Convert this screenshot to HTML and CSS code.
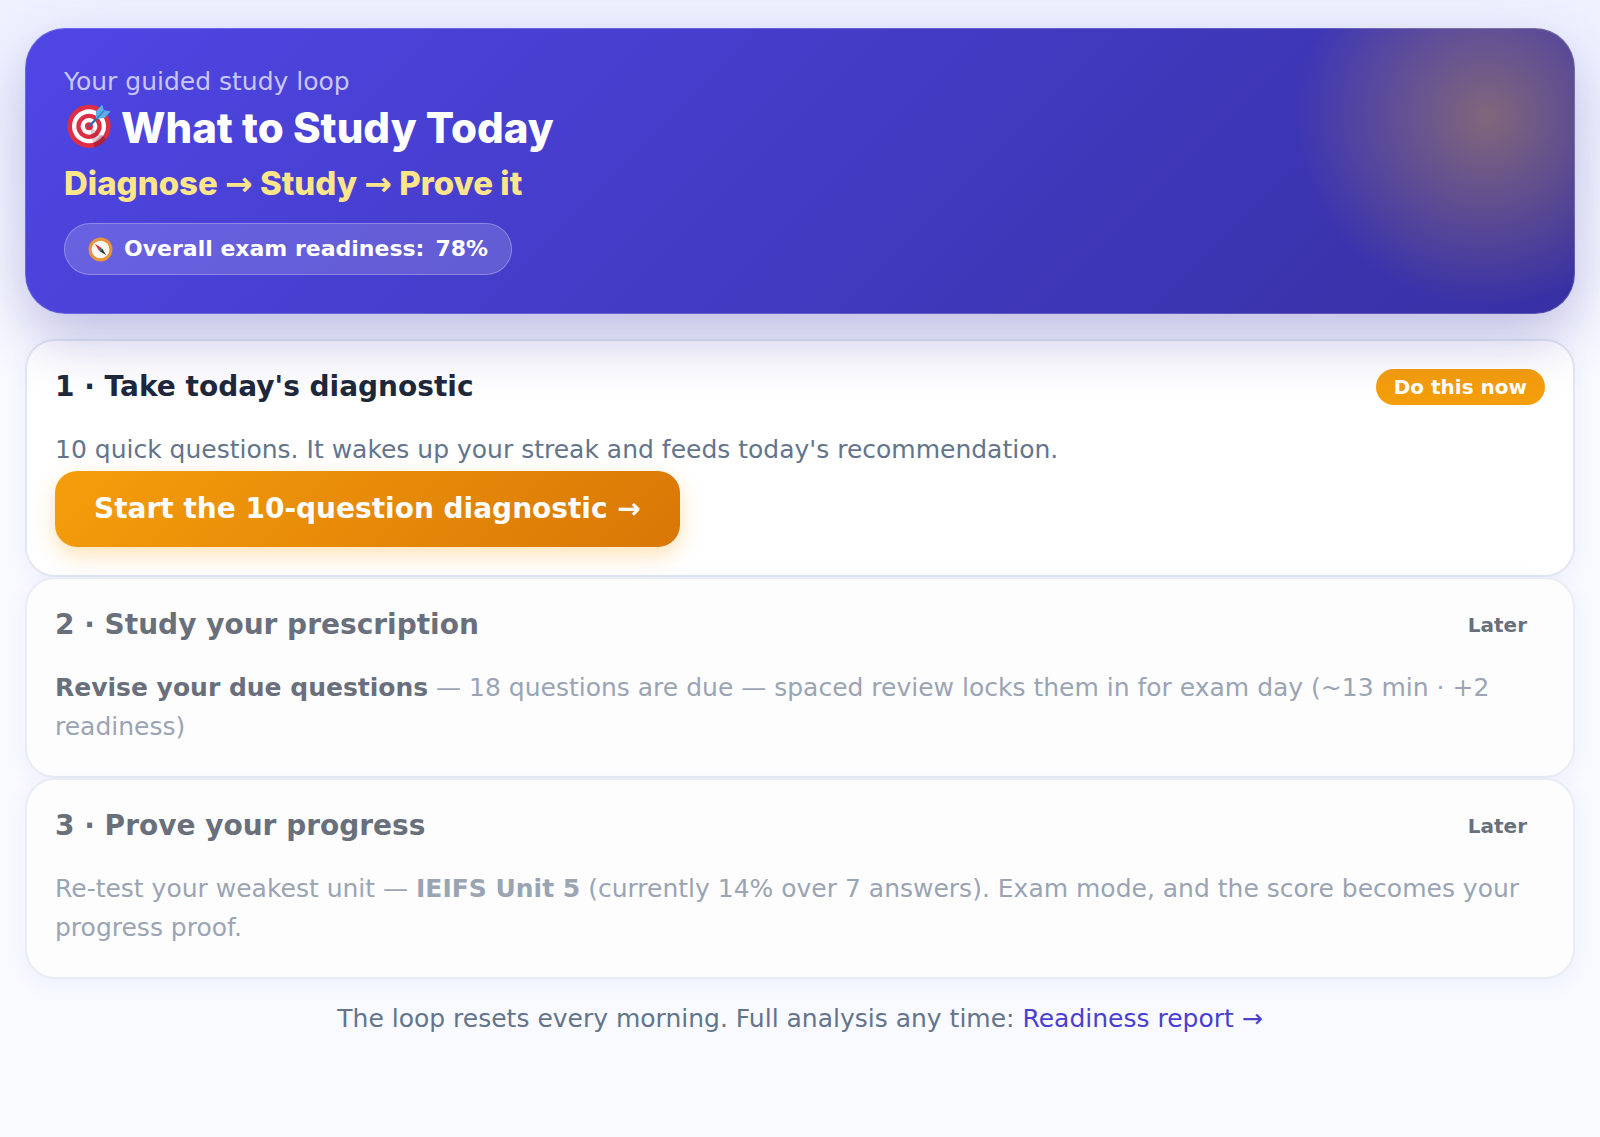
FILE: index.html
```html
<!DOCTYPE html>
<html lang="en">
<head>
    <meta charset="UTF-8">
    <meta name="viewport" content="width=device-width, initial-scale=1.0">
    <title>What to Study Today</title>
    <link rel="stylesheet" href="styles.css">
</head>
<body>
    <main class="page">
        <header class="hero">
            <p class="hero-eyebrow">Your guided study loop</p>
            <h1 class="hero-title">
                <svg class="icon-target" viewBox="42 42 144 144" aria-hidden="true">
                    <circle cx="117" cy="109" r="65" fill="#dd2e44"/>
                    <circle cx="117" cy="109" r="51" fill="#fff"/>
                    <circle cx="117" cy="109" r="38" fill="#dd2e44"/>
                    <circle cx="117" cy="109" r="25" fill="#fff"/>
                    <circle cx="117" cy="109" r="12" fill="#dd2e44"/>
                    <path d="M120 110 L160 140 L168 149 A65 65 0 0 1 133 172 L126 146 Z" fill="#7a1230" opacity="0.22"/>
                    <path d="M156 134 L168 149 A65 65 0 0 1 133 172 L130 160 Z" fill="#7a1230" opacity="0.3"/>
                    <path d="M118 108 L148 78" stroke="#2a6fa5" stroke-width="7" stroke-linecap="round"/>
                    <path d="M138 84 L138 64 L156 44 L162 61 L182 64 L164 84 L144 86 Z" fill="#5dade8"/>
                    <path d="M142 84 L162 62" stroke="#2f80bd" stroke-width="4"/>
                </svg>
                <span>What to Study Today</span>
            </h1>
            <p class="hero-steps">Diagnose <span class="arrow">→</span> Study <span class="arrow">→</span> Prove it</p>
            <div class="readiness">
                <svg class="icon-compass" viewBox="0 0 24 24" aria-hidden="true">
                    <circle cx="12" cy="12" r="11.500" fill="#e8943a"/>
                    <circle cx="12" cy="12" r="8.500" fill="#fbf8f4"/>
                    <path d="M6.500 6.500 L13 10.500 L10.500 13 Z" fill="#dd2e44"/>
                    <path d="M17.500 17.500 L13.500 11 L11 13.500 Z" fill="#292f33"/>
                    <circle cx="12" cy="12" r="1.500" fill="#55606b"/>
                </svg>
                <span>Overall exam readiness:</span>
                <strong>78%</strong>
            </div>
        </header>

        <section class="step">
            <div class="step-head">
                <h2 class="step-title">1 · Take today's diagnostic</h2>
                <span class="badge badge-now">Do this now</span>
            </div>
            <p class="step-text">10 quick questions. It wakes up your streak and feeds today's recommendation.</p>
            <button class="btn" type="button">Start the 10-question diagnostic →</button>
        </section>

        <section class="step step-later">
            <div class="step-head">
                <h2 class="step-title">2 · Study your prescription</h2>
                <span class="badge">Later</span>
            </div>
            <p class="step-text"><strong class="step-lead">Revise your due questions</strong> — 18 questions are due — spaced review locks them in for exam day (~13 min · +2 readiness)</p>
        </section>

        <section class="step step-later">
            <div class="step-head">
                <h2 class="step-title">3 · Prove your progress</h2>
                <span class="badge">Later</span>
            </div>
            <p class="step-text">Re-test your weakest unit — <strong>IEIFS Unit 5</strong> (currently 14% over 7 answers). Exam mode, and the score becomes your progress proof.</p>
        </section>

        <p class="footnote">The loop resets every morning. Full analysis any time: <a href="#">Readiness report →</a></p>
    </main>
</body>
</html>
```
FILE: styles.css
```css
* {
    box-sizing: border-box;
}

body {
    margin: 0;
    min-height: 100vh;
    font-family: "DejaVu Sans", sans-serif;
    font-size: 25px;
    line-height: 39px;
    color: #1e293b;
    background: linear-gradient(180deg, #eef2ff 0, #f8faff 320px, #f8faff 100%);
}

h1,
h2,
p {
    margin: 0;
}

.page {
    padding: 28px 25px;
}

/* Hero */
.hero {
    position: relative;
    padding: 38px;
    margin-bottom: 25px;
    border: 1px solid rgba(255, 255, 255, 0.18);
    border-radius: 40px;
    color: #fff;
    background:
        radial-gradient(circle 190px at calc(100% - 88px) 89px, rgba(251, 191, 36, 0.37), rgba(251, 191, 36, 0)) border-box,
        linear-gradient(135deg, #4f46e5, #3730a3) border-box;
    box-shadow: 0 24px 60px rgba(55, 48, 163, 0.3);
}

.hero-eyebrow {
    line-height: 30px;
    color: #c9c7f6;
}

.hero-title {
    display: flex;
    align-items: center;
    gap: 9px;
    font-family: Inter, sans-serif;
    font-size: 42px;
    font-weight: 800;
    line-height: 62px;
}

.icon-target {
    width: 48px;
    height: 48px;
}

.hero-steps {
    margin-bottom: 16px;
    font-family: Inter, sans-serif;
    font-size: 33px;
    font-weight: 800;
    line-height: 48px;
    color: #fde68a;
}

.hero-steps .arrow {
    font-family: "DejaVu Sans", sans-serif;
    line-height: 1;
}

.readiness {
    display: inline-flex;
    align-items: center;
    gap: 11px;
    padding: 0 23px;
    border: 1px solid rgba(255, 255, 255, 0.26);
    border-radius: 26px;
    font-size: 22px;
    font-weight: 700;
    line-height: 50px;
    background: rgba(255, 255, 255, 0.16);
}

.icon-compass {
    width: 25px;
    height: 25px;
}

/* Steps */
.step {
    padding: 28px;
    border: 2px solid #e2e8f0;
    border-radius: 30px;
    background: #fff;
    box-shadow: 0 5px 20px rgba(79, 90, 229, 0.07);
}

.step-later {
    border-color: #e8ecf3;
    background: #fdfdfe;
}

.step-head {
    display: flex;
    align-items: center;
    justify-content: space-between;
    margin-bottom: 25px;
}

.step-title {
    font-size: 28px;
    line-height: 36px;
}

.step-text {
    margin-bottom: 2px;
    color: #64748b;
}

.step-later .step-title,
.step-later .step-lead,
.step-later .badge {
    color: #69707c;
}

.step-later .step-text {
    color: #9aa4b3;
}

.badge {
    padding: 0 18px;
    border-radius: 18px;
    font-size: 20px;
    font-weight: 700;
    line-height: 36px;
}

.badge-now {
    color: #fff;
    background: #f59e0b;
}

.btn {
    display: block;
    padding: 0 39px;
    border: 0;
    border-radius: 22px;
    font-family: inherit;
    font-size: 28px;
    font-weight: 700;
    line-height: 76px;
    color: #fff;
    background: linear-gradient(135deg, #f59e0b, #d97706);
    box-shadow: 0 8px 22px rgba(245, 158, 11, 0.3);
    cursor: pointer;
}

/* Footer */
.footnote {
    margin-top: 20px;
    text-align: center;
    color: #64748b;
}

.footnote a {
    color: #4a3fd0;
    text-decoration: none;
}
```
